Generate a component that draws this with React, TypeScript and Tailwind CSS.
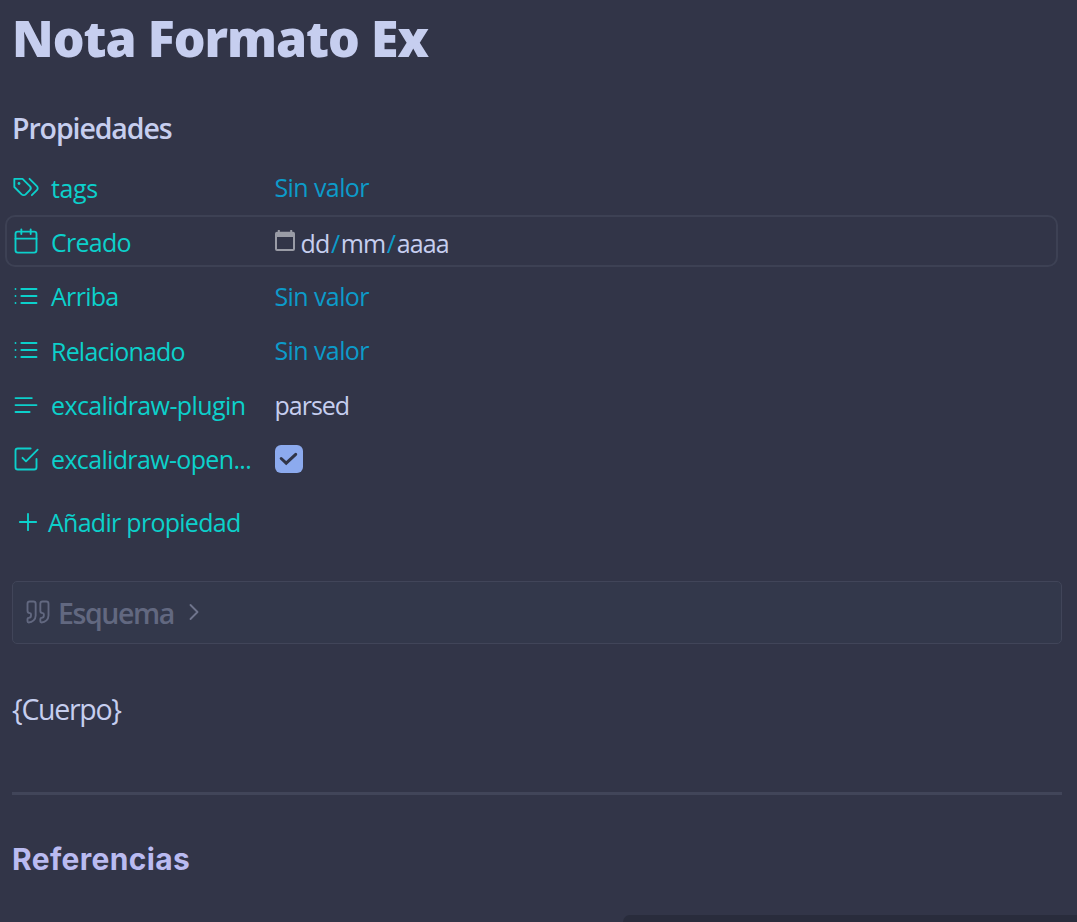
import React from 'react'

type IconProps = { children: React.ReactNode; className?: string; strokeWidth?: number }

function Icon({ children, className = '', strokeWidth = 1.6 }: IconProps) {
  return (
    <svg
      viewBox="0 0 24 24"
      fill="none"
      stroke="currentColor"
      strokeWidth={strokeWidth}
      strokeLinecap="round"
      strokeLinejoin="round"
      className={`size-7 shrink-0 ${className}`}
    >
      {children}
    </svg>
  )
}

const icons = {
  tags: (
    <>
      <path d="M9 5H2v7l6.29 6.29c.94.94 2.48.94 3.42 0l3.58-3.58c.94-.94.94-2.48 0-3.42L9 5Z" />
      <path d="M6 9.01V9" strokeWidth={2.4} />
      <path d="m15 5 6.3 6.3a2.4 2.4 0 0 1 0 3.4L17 19" />
    </>
  ),
  calendar: (
    <>
      <rect x="3" y="4" width="18" height="18" rx="2" />
      <path d="M16 2v4M8 2v4M3 10h18" />
    </>
  ),
  list: <path d="M8 6h13M8 12h13M8 18h13M3 6h.01M3 12h.01M3 18h.01" />,
  text: <path d="M17 6.1H3M21 12.1H3M15.1 18H3" />,
  check: (
    <>
      <path d="m9 11 3 3L22 4" />
      <path d="M21 12v7a2 2 0 0 1-2 2H5a2 2 0 0 1-2-2V5a2 2 0 0 1 2-2h11" />
    </>
  ),
}

type RowProps = {
  icon: React.ReactNode
  label: string
  labelClass: string
  active?: boolean
  children: React.ReactNode
}

function PropertyRow({ icon, label, labelClass, active, children }: RowProps) {
  return (
    <div
      className={`flex h-[52px] items-center rounded-[10px] border-2 pl-[5px] ${
        active ? 'border-[#3d4154]' : 'border-transparent'
      }`}
    >
      <div className="flex w-[263px] shrink-0 items-center gap-[11.500px] text-[#0cd0cb]">
        <Icon>{icon}</Icon>
        <span className={`whitespace-nowrap pt-px ${labelClass}`}>{label}</span>
      </div>
      {children}
    </div>
  )
}

function EmptyValue() {
  return <span className="tracking-[-0.6px] text-[#0c9bca]">Sin valor</span>
}

export default function App() {
  return (
    <main className="flex h-[922px] w-[1077px] flex-col overflow-hidden bg-[#323548] pl-3 font-['Open_Sans',sans-serif] text-[#c6ceef]">
      <h1 className="mt-[3px] h-[70px] whitespace-nowrap font-['Noto_Sans',sans-serif] text-[50px] font-black leading-[70px] tracking-[-1px]">
        Nota Formato Ex
      </h1>

      <h2 className="mt-[35px] h-10 text-[28.5px] font-semibold leading-10 tracking-[-1.1px]">Propiedades</h2>

      <section className="-ml-[7.500px] mt-[13px] flex w-[1053px] flex-col gap-[2.4px] text-[25px] leading-[34px]">
        <PropertyRow icon={icons.tags} label="tags" labelClass="tracking-[-0.4px]">
          <EmptyValue />
        </PropertyRow>
        <PropertyRow icon={icons.calendar} label="Creado" labelClass="tracking-[-0.75px]" active>
          <div className="flex items-center gap-[6px]">
            <svg viewBox="0 0 20 21" className="-mt-px h-[21px] w-5 text-[#9a9ca6]" fill="currentColor">
              <path
                fillRule="evenodd"
                d="M2.8 0h2v1.7h10.4V0h2v1.7h.8a2 2 0 0 1 2 2V19a2 2 0 0 1-2 2H2a2 2 0 0 1-2-2V3.700a2 2 0 0 1 2-2h.8V0ZM2 7v12h16V7H2Z"
              />
            </svg>
            <span className="whitespace-nowrap pt-[3px] tracking-[-0.85px]">
              dd<span className="px-[1.500px] text-[#0c9bca]">/</span>mm<span className="px-[1.500px] text-[#0c9bca]">/</span>aaaa
            </span>
          </div>
        </PropertyRow>
        <PropertyRow icon={icons.list} label="Arriba" labelClass="tracking-[-0.7px]">
          <EmptyValue />
        </PropertyRow>
        <PropertyRow icon={icons.list} label="Relacionado" labelClass="tracking-[-0.8px]">
          <EmptyValue />
        </PropertyRow>
        <PropertyRow icon={icons.text} label="excalidraw-plugin" labelClass="tracking-[-0.6px]">
          <span className="tracking-[-1px]">parsed</span>
        </PropertyRow>
        <PropertyRow icon={icons.check} label="excalidraw-open..." labelClass="tracking-[-0.65px]">
          <span className="ml-[0.500px] flex size-7 items-center justify-center rounded-md bg-[#8caaee]">
            <svg viewBox="0 0 28 28" fill="none" stroke="#303446" strokeWidth="3" className="size-7">
              <path d="m6.200 13.500 5 4.600 9.500-8.800" strokeLinecap="round" />
            </svg>
          </span>
        </PropertyRow>
      </section>

      <div className="mt-[10px] flex h-[54px] items-center gap-[6px] pl-[2px] text-[25px] leading-[34px] text-[#0cd0cb]">
        <Icon>
          <path d="M5 12h14M12 5v14" />
        </Icon>
        <span className="pt-px tracking-[-0.72px]">Añadir propiedad</span>
      </div>

      <div className="mt-8 flex h-[63px] w-[1050px] items-center rounded-[5px] border border-[#414559] bg-[#33384b] pl-[11px] text-[#626880]">
        <Icon>
          <path d="M16 3a2 2 0 0 0-2 2v6a2 2 0 0 0 2 2 1 1 0 0 1 1 1v1a2 2 0 0 1-2 2 1 1 0 0 0-1 1v2a1 1 0 0 0 1 1 6 6 0 0 0 6-6V5a2 2 0 0 0-2-2z" />
          <path d="M5 3a2 2 0 0 0-2 2v6a2 2 0 0 0 2 2 1 1 0 0 1 1 1v1a2 2 0 0 1-2 2 1 1 0 0 0-1 1v2a1 1 0 0 0 1 1 6 6 0 0 0 6-6V5a2 2 0 0 0-2-2z" />
        </Icon>
        <span className="ml-[6px] w-[121.500px] whitespace-nowrap pt-px text-[28.5px] font-semibold leading-10 tracking-[-1.4px]">
          Esquema
        </span>
        <Icon className="text-[#6f748c]">
          <path d="m9 18 6-6-6-6" />
        </Icon>
      </div>

      <p className="mt-[45px] h-10 text-[28.5px] leading-10 tracking-[-1.3px]">{'{Cuerpo}'}</p>

      <hr className="mt-[63px] w-[1050px] border-0 border-t-[3px] border-[#414559]" />

      <h2 className="mt-[44px] h-10 font-['Inter',sans-serif] text-[30px] font-bold leading-10 tracking-[0.35px] text-[#babbf1]">
        Referencias
      </h2>

      {/* status bar */}
      <div className="ml-[611px] mt-auto h-[7px] shrink-0 rounded-tl-[10px] bg-[#292c3c]" />
    </main>
  )
}
